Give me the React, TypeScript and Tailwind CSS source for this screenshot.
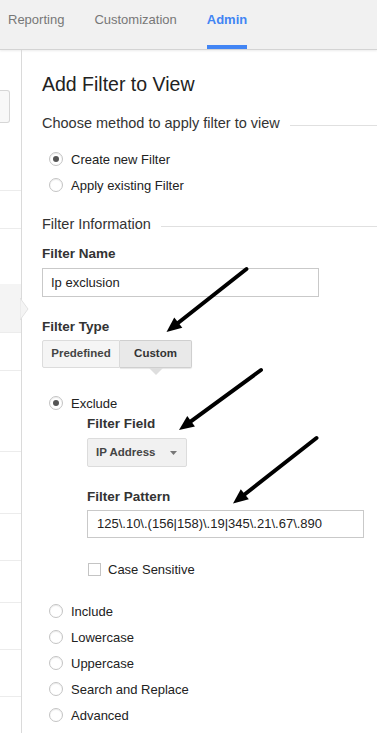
import type { ReactNode } from 'react'

type ArrowProps = { x1: number; y1: number; x2: number; y2: number }

function Arrow({ x1, y1, x2, y2 }: ArrowProps) {
  const dx = x2 - x1
  const dy = y2 - y1
  const len = Math.hypot(dx, dy)
  const ux = dx / len
  const uy = dy / len
  const px = -uy
  const py = ux
  const head = 15
  const half = 6.5
  const bx = x2 - ux * head
  const by = y2 - uy * head
  const pts = `${x2},${y2} ${bx + px * half},${by + py * half} ${bx - px * half},${by - py * half}`
  return (
    <g>
      <line x1={x1} y1={y1} x2={bx + ux * 2} y2={by + uy * 2} stroke="#000" strokeWidth={4} strokeLinecap="round" />
      <polygon points={pts} fill="#000" />
    </g>
  )
}

function Radio({ checked, children }: { checked?: boolean; children: ReactNode }) {
  return (
    <div className="flex h-[26px] items-center pl-[7px]">
      <span className="flex h-[14px] w-[14px] items-center justify-center rounded-full border border-[#c4c4c4] bg-white shadow-[inset_0_1px_1px_rgba(0,0,0,0.08)]">
        {checked && <span className="h-[6px] w-[6px] rounded-full bg-[#555]" />}
      </span>
      <span className="ml-[8px] text-[13px] leading-[15px] text-[#222]">{children}</span>
    </div>
  )
}

function Heading({ children }: { children: ReactNode }) {
  return (
    <div className="flex items-center gap-[10px]">
      <span className="text-[14.5px] leading-[18px] text-[#333] whitespace-nowrap">{children}</span>
      <span className="mt-[5px] h-px flex-1 bg-[#e0e0e0]" />
    </div>
  )
}

function Label({ children }: { children: ReactNode }) {
  return <div className="text-[13.5px] font-bold leading-[16px] text-[#333]">{children}</div>
}

const sidebarRows = [
  { h: 38 },
  { h: 56 },
  { h: 48, active: true },
  { h: 38 },
  { h: 81 },
  { h: 62 },
  { h: 47 },
  { h: 42 },
  { h: 47 },
  { h: 47 },
  { h: 40 },
]

export default function App() {
  return (
    <div className="relative h-[733px] w-[377px] overflow-hidden bg-white font-['Liberation_Sans',Arial,sans-serif]">
      {/* top tabs */}
      <div className="flex h-[50px] border-b border-[#d4d4d4] bg-[#f1f1f1] pl-[8px] shadow-[0_1px_2px_rgba(0,0,0,0.08)]">
        <div className="gap-[30px] flex">
          <div className="pt-[12px] text-[13px] leading-[15px] text-[#777]">Reporting</div>
          <div className="pt-[12px] text-[13px] leading-[15px] text-[#777]">Customization</div>
          <div className="border-b-[4px] border-[#4285f4] pt-[12px] text-[13px] font-bold leading-[15px] text-[#4285f4]">
            Admin
          </div>
        </div>
      </div>

      <div className="flex">
        {/* left rail */}
        <div className="relative w-[22px] shrink-0 border-r border-[#dadada]">
          <div className="mt-[40px] h-[33px] w-[10px] rounded-r-[3px] border border-l-0 border-[#d6d6d6] bg-[#f8f8f8]" />
          <div className="mt-[67px]">
            {sidebarRows.map((r, i) => (
              <div
                key={i}
                className={`relative border-t ${r.active ? 'border-transparent bg-[#f4f4f4]' : 'border-[#ececec]'}`}
                style={{ height: r.h }}
              >
                {r.active && (
                  <svg className="absolute left-[20px] top-[13px]" width="10" height="22" viewBox="0 0 10 22">
                    <polygon points="0,0 8,11 0,22" fill="#f4f4f4" stroke="#e2e2e2" strokeWidth="1" />
                  </svg>
                )}
              </div>
            ))}
          </div>
        </div>

        {/* main form */}
        <div className="flex-1 pl-[20px] pt-[22px]">
          <h1 className="text-[19.5px] font-normal leading-[24px] text-[#222]">Add Filter to View</h1>

          <div className="mt-[18px]">
            <Heading>Choose method to apply filter to view</Heading>
          </div>
          <div className="mt-[14px]">
            <Radio checked>Create new Filter</Radio>
            <Radio>Apply existing Filter</Radio>
          </div>

          <div className="mt-[17px]">
            <Heading>Filter Information</Heading>
          </div>

          <div className="mt-[13px]">
            <Label>Filter Name</Label>
          </div>
          <div className="mt-[6px] flex h-[29px] w-[277px] items-center border border-[#c9c9c9] bg-white px-[8px] text-[13px] text-[#222]">
            Ip exclusion
          </div>

          <div className="mt-[22px]">
            <Label>Filter Type</Label>
          </div>
          <div className="mt-[5px] flex h-[28px]">
            <div className="flex w-[78px] items-center justify-center rounded-l-[2px] border border-[#dcdcdc] bg-[#f5f5f5] text-[11.5px] font-bold text-[#444]">
              Predefined
            </div>
            <div className="relative flex w-[72px] items-center justify-center rounded-r-[2px] border border-l-0 border-[#cfcfcf] bg-[#e9e9e9] text-[11.5px] font-bold text-[#333] shadow-[0_1px_1px_rgba(0,0,0,0.1)]">
              Custom
              <svg className="absolute left-[29px] top-[27px]" width="14" height="8" viewBox="0 0 14 8">
                <polygon points="0,0 14,0 7,7" fill="#dedede" />
              </svg>
            </div>
          </div>

          <div className="mt-[22px]">
            <Radio checked>Exclude</Radio>
          </div>
          <div className="ml-[45px]">
            <Label>Filter Field</Label>
            <div className="mt-[6px] flex h-[29px] w-[100px] items-center justify-between rounded-[2px] border border-[#dcdcdc] bg-[#f1f1f1] pl-[8px] pr-[9px]">
              <span className="text-[11.5px] font-bold text-[#444]">IP Address</span>
              <svg width="7" height="4" viewBox="0 0 7 4">
                <polygon points="0,0 7,0 3.5,4" fill="#777" />
              </svg>
            </div>

            <div className="mt-[22px]">
              <Label>Filter Pattern</Label>
            </div>
            <div className="mt-[5px] flex h-[28px] w-[277px] items-center border border-[#c9c9c9] bg-white px-[9px] text-[13px] text-[#222]">
              125\.10\.(156|158)\.19|345\.21\.67\.890
            </div>

            <div className="mt-[18px] flex h-[26px] items-center pl-[1px]">
              <span className="h-[13px] w-[13px] border border-[#c4c4c4] bg-white" />
              <span className="ml-[7px] text-[13px] leading-[15px] text-[#222]">Case Sensitive</span>
            </div>
          </div>

          <div className="mt-[16px]">
            <Radio>Include</Radio>
            <Radio>Lowercase</Radio>
            <Radio>Uppercase</Radio>
            <Radio>Search and Replace</Radio>
            <Radio>Advanced</Radio>
          </div>
        </div>
      </div>

      {/* annotation arrows */}
      <svg className="pointer-events-none absolute left-0 top-0" width="377" height="733">
        <Arrow x1={246.5} y1={269} x2={166.5} y2={332} />
        <Arrow x1={261} y1={370} x2={179} y2={430} />
        <Arrow x1={316.5} y1={438} x2={233} y2={503.5} />
      </svg>
    </div>
  )
}
